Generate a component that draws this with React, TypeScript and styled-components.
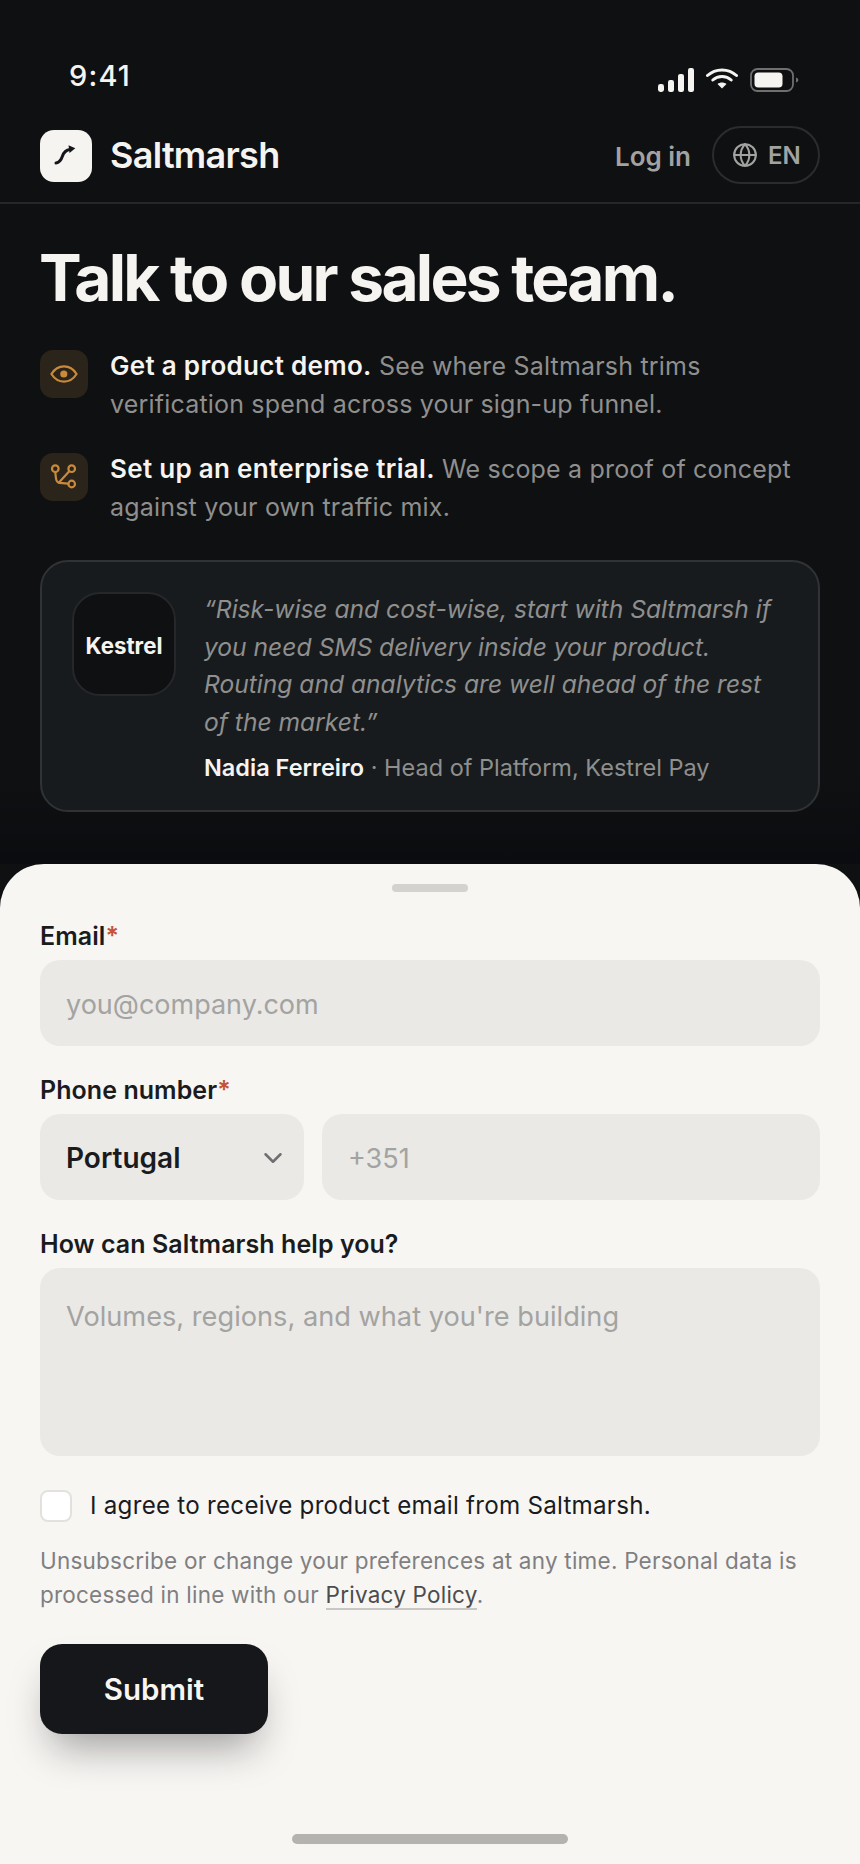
import styled, { createGlobalStyle } from "styled-components";
import { ChevronDown, Globe } from "lucide-react";

const GlobalStyle = createGlobalStyle`
  html, body {
    margin: 0;
    padding: 0;
    background: #0f1012;
  }
  * {
    box-sizing: border-box;
  }
  input, textarea, select, button {
    font-family: inherit;
  }
`;

const perks = [
  {
    icon: "eye",
    title: "Get a product demo.",
    text: "See where Saltmarsh trims verification spend across your sign-up funnel.",
  },
  {
    icon: "branch",
    title: "Set up an enterprise trial.",
    text: "We scope a proof of concept against your own traffic mix.",
  },
];

const App = () => {
  return (
    <Page>
      <GlobalStyle />
      <DarkArea>
        <StatusBar>
          <Clock>9:41</Clock>
          <StatusIcons>
            <svg width="36" height="24" viewBox="0 0 36 24">
              <rect x="0" y="16" width="6" height="8" rx="2.4" fill="#f5f4f1" />
              <rect x="10" y="12" width="6" height="12" rx="2.2" fill="#f5f4f1" />
              <rect x="20" y="6" width="6" height="18" rx="2.2" fill="#f5f4f1" />
              <rect x="30" y="0" width="6" height="24" rx="2.2" fill="#f5f4f1" />
            </svg>
            <svg width="32" height="24" viewBox="0 0 32 24">
              <path d="M1.5 7.5C9.5 0 22.5 0 30.5 7.5" stroke="#f5f4f1" strokeWidth="3" fill="none" strokeLinecap="round" />
              <path d="M6.8 12C12 7.4 20 7.4 25.2 12" stroke="#f5f4f1" strokeWidth="3" fill="none" strokeLinecap="round" />
              <path d="M11.5 16C14.2 14 17.8 14 20.5 16L16 20.4Z" fill="#f5f4f1" />
            </svg>
            <svg width="49" height="24" viewBox="0 0 49 24">
              <rect x="1" y="1" width="42" height="22" rx="6.5" fill="none" stroke="#6f6f70" strokeWidth="1.8" />
              <rect x="4.5" y="4.5" width="28" height="15" rx="3.8" fill="#f5f4f1" />
              <path d="M46 9.5C47.6 10 48.3 11 48.3 12C48.3 13 47.6 14 46 14.5Z" fill="#6f6f70" />
            </svg>
          </StatusIcons>
        </StatusBar>
        <Header>
          <Brand>
            <LogoMark>
              <svg width="26" height="26" viewBox="0 0 26 26">
                <path d="M3 20C7.5 19.5 8.5 16 9.5 13C10.5 10 12 7 17 6.4" stroke="#15161a" strokeWidth="3" fill="none" strokeLinecap="round" />
                <path d="M15.5 2.2L22.3 5.3L16.5 10Z" fill="#15161a" />
              </svg>
            </LogoMark>
            <BrandName>Saltmarsh</BrandName>
          </Brand>
          <HeaderActions>
            <LogIn>Log in</LogIn>
            <LangPill>
              <Globe size={26} strokeWidth={1.9} />
              EN
            </LangPill>
          </HeaderActions>
        </Header>
        <Intro>
          <Headline>Talk to our sales team.</Headline>
          <PerkList>
            {perks.map((perk) => (
              <Perk key={perk.title}>
                <PerkIcon>
                  {perk.icon === "eye" ? (
                    <svg width="28" height="28" viewBox="0 0 28 28" fill="none">
                      <path d="M1.4 14C4.6 9 9 6.4 14 6.4S23.4 9 26.6 14C23.4 19 19 21.6 14 21.6S4.6 19 1.4 14Z" stroke="#c98a3c" strokeWidth="2.2" strokeLinejoin="round" />
                      <circle cx="13.8" cy="14" r="3.6" fill="#c98a3c" />
                    </svg>
                  ) : (
                    <svg width="28" height="28" viewBox="0 0 28 28" fill="none" stroke="#c98a3c" strokeWidth="2.2" strokeLinecap="round">
                      <circle cx="5.3" cy="5.7" r="3.3" />
                      <circle cx="21.7" cy="5.7" r="3.3" />
                      <circle cx="21.7" cy="21" r="3.3" />
                      <path d="M5.3 9.2L5.8 14Q6.2 19.4 9.5 19.8L18.2 20.6" />
                      <path d="M9 19.6L19 8.4" />
                    </svg>
                  )}
                </PerkIcon>
                <PerkText>
                  <strong>{perk.title}</strong> {perk.text}
                </PerkText>
              </Perk>
            ))}
          </PerkList>
          <QuoteCard>
            <QuoteLogo>Kestrel</QuoteLogo>
            <QuoteBody>
              <QuoteText>
                “Risk-wise and cost-wise, start with Saltmarsh if you need SMS delivery inside your product. Routing and
                analytics are well ahead of the rest of the market.”
              </QuoteText>
              <QuoteAuthor>
                <strong>Nadia Ferreiro</strong> · Head of Platform, Kestrel Pay
              </QuoteAuthor>
            </QuoteBody>
          </QuoteCard>
        </Intro>
      </DarkArea>
      <Sheet>
        <Handle />
        <Form>
          <Field>
            <Label>
              Email<Required>*</Required>
            </Label>
            <TextInput placeholder="you@company.com" />
          </Field>
          <Field>
            <Label>
              Phone number<Required>*</Required>
            </Label>
            <PhoneRow>
              <CountrySelect>
                Portugal
                <ChevronDown size={30} strokeWidth={2} color="#6f6f72" />
              </CountrySelect>
              <TextInput placeholder="+351" />
            </PhoneRow>
          </Field>
          <Field>
            <Label>How can Saltmarsh help you?</Label>
            <TextArea placeholder="Volumes, regions, and what you're building" />
          </Field>
          <ConsentRow>
            <CheckBox type="checkbox" />
            <ConsentLabel>I agree to receive product email from Saltmarsh.</ConsentLabel>
          </ConsentRow>
          <FinePrint>
            Unsubscribe or change your preferences at any time. Personal data is processed in line with our{" "}
            <PolicyLink>Privacy Policy</PolicyLink>.
          </FinePrint>
          <SubmitButton type="button">Submit</SubmitButton>
        </Form>
        <HomeIndicator />
      </Sheet>
    </Page>
  );
};

const Page = styled.div`
  width: 860px;
  height: 1864px;
  overflow: hidden;
  display: flex;
  flex-direction: column;
  background: #0f1012;
  font-family: Inter, "Liberation Sans", sans-serif;
`;

const DarkArea = styled.div`
  height: 864px;
  flex: none;
  background: linear-gradient(180deg, #0f1012 90%, #0b0c0f 100%);
`;

const StatusBar = styled.div`
  height: 122px;
  padding: 57px 61px 0 69px;
  display: flex;
  justify-content: space-between;
  align-items: flex-start;
`;

const Clock = styled.div`
  font-size: 29px;
  line-height: 38px;
  font-weight: 500;
  letter-spacing: 0.04em;
  color: #f5f4f1;
`;

const StatusIcons = styled.div`
  display: flex;
  align-items: center;
  gap: 12px;
  padding-top: 11px;
`;

const Header = styled.header`
  height: 82px;
  padding: 4px 40px 0;
  display: flex;
  justify-content: space-between;
  align-items: flex-start;
  border-bottom: 2px solid #26272a;
`;

const Brand = styled.div`
  display: flex;
  align-items: center;
  gap: 18px;
  margin-top: 4px;
`;

const LogoMark = styled.div`
  width: 52px;
  height: 52px;
  border-radius: 14px;
  background: #f5f4f1;
  display: flex;
  align-items: center;
  justify-content: center;
`;

const BrandName = styled.div`
  font-size: 36px;
  font-weight: 600;
  letter-spacing: -0.02em;
  color: #f5f4f1;
  margin-bottom: 2px;
`;

const HeaderActions = styled.div`
  display: flex;
  align-items: center;
  gap: 21px;
`;

const LogIn = styled.div`
  font-size: 26px;
  font-weight: 600;
  color: #a2a2a0;
  padding-top: 2px;
`;

const LangPill = styled.div`
  width: 108px;
  height: 58px;
  padding-left: 18px;
  display: flex;
  align-items: center;
  gap: 10px;
  border: 2px solid #2b2c2f;
  border-radius: 29px;
  font-size: 24px;
  font-weight: 600;
  color: #a2a2a0;
`;

const Intro = styled.div`
  padding: 0 40px;
`;

const Headline = styled.h1`
  margin: 38px 0 0 -1px;
  font-size: 64px;
  line-height: 72px;
  font-weight: 700;
  letter-spacing: -0.043em;
  color: #f5f4f1;
`;

const PerkList = styled.div`
  margin-top: 33px;
  display: flex;
  flex-direction: column;
  gap: 27px;
`;

const Perk = styled.div`
  display: flex;
  gap: 22px;
`;

const PerkIcon = styled.div`
  flex: none;
  width: 48px;
  height: 48px;
  margin-top: 3px;
  border-radius: 13px;
  background: #2b241a;
  display: flex;
  align-items: center;
  justify-content: center;
`;

const PerkText = styled.p`
  margin: 0;
  font-size: 25px;
  line-height: 38px;
  letter-spacing: 0.19px;
  color: #8f8f8d;

  strong {
    font-size: 26px;
    font-weight: 600;
    letter-spacing: 0.3px;
    color: #f5f4f1;
  }
`;

const QuoteCard = styled.div`
  margin-top: 34px;
  height: 252px;
  padding: 30px 30px 0;
  display: flex;
  gap: 28px;
  background: #181b1e;
  border: 2px solid #303235;
  border-radius: 28px;
`;

const QuoteLogo = styled.div`
  flex: none;
  width: 104px;
  height: 104px;
  padding-top: 2px;
  border-radius: 28px;
  background: #0f1012;
  border: 2px solid #26272a;
  display: flex;
  align-items: center;
  justify-content: center;
  font-size: 22.3px;
  font-weight: 700;
  color: #f5f4f1;
`;

const QuoteBody = styled.div`
  min-width: 0;
  margin-top: -1px;
`;

const QuoteText = styled.p`
  margin: 0;
  font-size: 24.6px;
  line-height: 37.5px;
  font-style: italic;
  color: #8f8f8d;
`;

const QuoteAuthor = styled.p`
  margin: 9px 0 0;
  font-size: 23.5px;
  line-height: 36px;
  color: #8f8f8d;

  strong {
    font-weight: 600;
    color: #f5f4f1;
  }
`;

const Sheet = styled.div`
  position: relative;
  flex: 1;
  background: #f7f6f3;
  border-radius: 44px 44px 0 0;
  padding: 20px 40px 0;
`;

const Handle = styled.div`
  width: 76px;
  height: 8px;
  margin: 0 auto;
  border-radius: 4px;
  background: #d3d2cf;
`;

const Form = styled.form`
  margin-top: 28px;
  display: flex;
  flex-direction: column;
`;

const Field = styled.div`
  display: flex;
  flex-direction: column;
  gap: 8px;
  margin-bottom: 28px;
`;

const Label = styled.label`
  font-size: 25px;
  line-height: 32px;
  font-weight: 600;
  letter-spacing: 0.06px;
  color: #1a1b1e;
`;

const Required = styled.span`
  color: #c4533a;
`;

const TextInput = styled.input`
  min-width: 0;
  width: 100%;
  height: 86px;
  padding: 2px 26px 0;
  border: none;
  outline: none;
  border-radius: 20px;
  background: #eae9e6;
  font-size: 27px;
  color: #1a1b1e;

  &::placeholder {
    color: #a3a3a1;
    opacity: 1;
  }
`;

const PhoneRow = styled.div`
  display: flex;
  gap: 18px;
`;

const CountrySelect = styled.div`
  flex: none;
  width: 264px;
  height: 86px;
  padding: 2px 16px 0 26px;
  border-radius: 20px;
  background: #eae9e6;
  display: flex;
  align-items: center;
  justify-content: space-between;
  font-size: 28px;
  font-weight: 600;
  color: #1a1b1e;
`;

const TextArea = styled.textarea`
  display: block;
  width: 100%;
  height: 188px;
  padding: 31px 26px;
  border: none;
  outline: none;
  resize: none;
  border-radius: 20px;
  background: #eae9e6;
  font-size: 27.2px;
  line-height: 36px;
  color: #1a1b1e;

  &::placeholder {
    color: #a3a3a1;
    opacity: 1;
  }
`;

const ConsentRow = styled.div`
  margin-top: 5px;
  display: flex;
  align-items: center;
  gap: 18px;
`;

const CheckBox = styled.input`
  appearance: none;
  flex: none;
  width: 32px;
  height: 32px;
  margin: 0;
  border-radius: 8px;
  border: 2px solid #e2e1de;
  background: #ffffff;
`;

const ConsentLabel = styled.span`
  font-size: 24.2px;
  line-height: 34px;
  letter-spacing: 0.01em;
  color: #1a1b1e;
`;

const FinePrint = styled.p`
  margin: 21px 0 0;
  font-size: 22.5px;
  line-height: 34px;
  letter-spacing: 0.01em;
  color: #7f7f82;
`;

const PolicyLink = styled.span`
  color: #4c4c4f;
  border-bottom: 2px solid #c8c7c4;
`;

const SubmitButton = styled.button`
  align-self: flex-start;
  margin-top: 32px;
  width: 228px;
  height: 90px;
  border: none;
  border-radius: 22px;
  background: #16171a;
  box-shadow: 0 24px 40px -12px rgba(22, 23, 26, 0.4);
  font-size: 29.5px;
  font-weight: 600;
  color: #f7f6f3;
`;

const HomeIndicator = styled.div`
  position: absolute;
  left: 292px;
  bottom: 20px;
  width: 276px;
  height: 10px;
  border-radius: 5px;
  background: #b4b3b0;
`;

export default App;
